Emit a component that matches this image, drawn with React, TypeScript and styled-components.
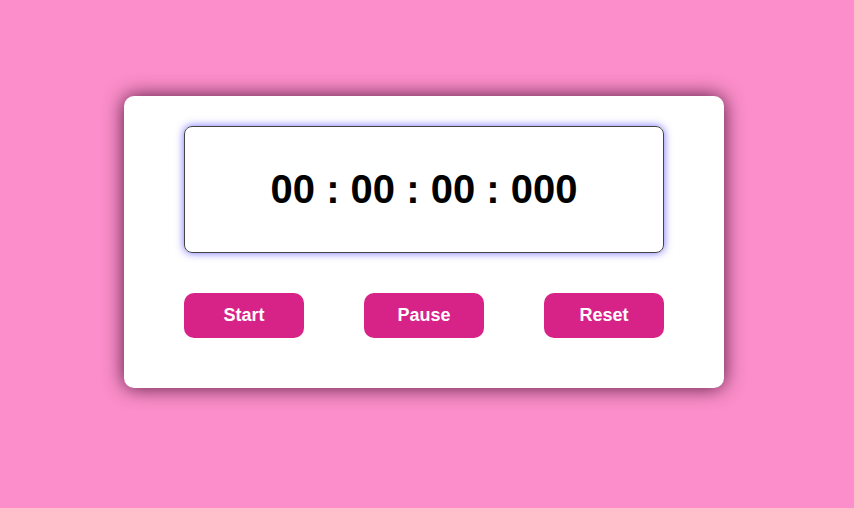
import React from "react";
import styled, { createGlobalStyle } from "styled-components";

const Global = createGlobalStyle`
  html, body { margin: 0; padding: 0; }
  body {
    background: #fc8ecb;
    font-family: "Liberation Sans", Arial, sans-serif;
    min-height: 508px;
  }
`;

const Page = styled.div`
  display: flex;
  padding: 96px 0 0 124px;
`;

const Card = styled.div`
  width: 600px;
  height: 292px;
  box-sizing: border-box;
  background: #ffffff;
  border-radius: 10px;
  box-shadow: 0 0 20px rgba(50, 0, 30, 0.85);
  padding: 30px 60px 0;
  display: flex;
  flex-direction: column;
  gap: 40px;
`;

const Display = styled.div`
  height: 127px;
  box-sizing: border-box;
  border: 1px solid #444;
  border-radius: 8px;
  box-shadow: 0 0 8px rgba(80, 70, 255, 0.8);
  display: flex;
  align-items: center;
  justify-content: center;
  font-size: 40px;
  font-weight: 700;
  color: #000;
  white-space: pre;
`;

const Controls = styled.div`
  display: flex;
  justify-content: space-between;
`;

const Button = styled.button`
  width: 120px;
  height: 45px;
  border: none;
  border-radius: 10px;
  background: #d72288;
  color: #fff;
  font-family: "Liberation Sans", Arial, sans-serif;
  font-size: 18px;
  font-weight: 700;
  cursor: pointer;
  padding: 0;
`;

export default function App() {
  return (
    <>
      <Global />
      <Page>
        <Card>
          <Display>00 : 00 : 00 : 000</Display>
          <Controls>
            <Button>Start</Button>
            <Button>Pause</Button>
            <Button>Reset</Button>
          </Controls>
        </Card>
      </Page>
    </>
  );
}
